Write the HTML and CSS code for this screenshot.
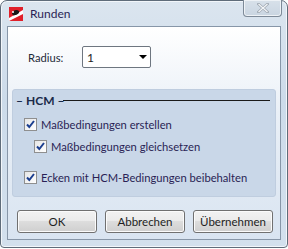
FILE: index.html
```html
<!DOCTYPE html>
<html>
<head>
<meta charset="utf-8">
<link rel="stylesheet" href="styles.css">
</head>
<body>
<div class="window">
  <div class="titlebar">
    <svg class="appicon" width="14" height="14" viewBox="0 0 14 14">
      <rect width="14" height="14" fill="#e0202a"/>
      <path d="M0 11 L14 3 L14 7 L0 14 Z" fill="#ffffff"/>
      <path d="M3 6 C4 3 8 2 10 4 C11 6 8 8 6 8 C5 9 3 8 3 6 Z" fill="#1a1a1a"/>
      <circle cx="4" cy="5" r="1" fill="#ffffff"/>
    </svg>
    <span class="title">Runden</span>
    <div class="close">
      <svg width="12" height="10" viewBox="0 0 12 10">
        <path d="M1.5 1 L10.5 9 M10.5 1 L1.5 9" stroke="#9ea7b1" stroke-width="2.6" stroke-linecap="square"/>
        <path d="M1.5 1 L10.5 9 M10.5 1 L1.5 9" stroke="#f4f6f8" stroke-width="1.2"/>
      </svg>
    </div>
  </div>
  <div class="client">
    <div class="row-radius">
      <span class="label">Radius:</span>
      <div class="combo"><span>1</span><span class="arrow"></span></div>
    </div>
    <div class="group">
      <div class="group-head"><span class="dash">–</span><span class="gtitle">HCM</span><span class="dash2">–</span><span class="line"></span></div>
      <label class="check lvl1"><span class="box"><svg width="9" height="9" viewBox="0 0 9 9"><path d="M1 4.5 L3.3 7 L8 1" fill="none" stroke="#1b3e8f" stroke-width="2"/></svg></span>Maßbedingungen erstellen</label>
      <label class="check lvl2"><span class="box"><svg width="9" height="9" viewBox="0 0 9 9"><path d="M1 4.5 L3.3 7 L8 1" fill="none" stroke="#1b3e8f" stroke-width="2"/></svg></span>Maßbedingungen gleichsetzen</label>
      <label class="check lvl1 last"><span class="box"><svg width="9" height="9" viewBox="0 0 9 9"><path d="M1 4.5 L3.3 7 L8 1" fill="none" stroke="#1b3e8f" stroke-width="2"/></svg></span>Ecken mit HCM-Bedingungen beibehalten</label>
    </div>
    <div class="buttons">
      <button class="btn">OK</button>
      <button class="btn">Abbrechen</button>
      <button class="btn">Übernehmen</button>
    </div>
  </div>
</div>
</body>
</html>
```
FILE: styles.css
```css
html, body { margin: 0; padding: 0; }
body {
  width: 288px; height: 249px; overflow: hidden;
  font-family: "Lato", "Noto Sans", sans-serif;
  font-size: 11.2px; color: #1e1e1e;
  background: #ffffff;
  white-space: nowrap;
}
.window {
  box-sizing: border-box;
  width: 288px; height: 248px;
  border: 1px solid #5f6c7a;
  border-radius: 7px 7px 4px 4px;
  background: linear-gradient(180deg, #dbe5ef 0%, #ccdbea 40%, #d3e0ed 100%);
  display: flex; flex-direction: column;
  box-shadow: inset 0 0 0 1px #f2f6fa;
}
.titlebar {
  height: 25px; display: flex; align-items: center;
  padding-left: 8px; position: relative;
}
.appicon { margin-right: 7px; margin-top: 1px; }
.title { color: #2a1f55; font-size: 12px; margin-top: -1px; }
.close {
  position: absolute; right: 5px; top: -1px;
  width: 39px; height: 17px; box-sizing: border-box;
  border: 1px solid #7d8a98; border-top: none;
  border-radius: 0 0 4px 4px;
  background: linear-gradient(180deg, #d8e1ea, #c9d5e1);
  box-shadow: inset 0 0 0 1px #eef2f6;
  display: flex; align-items: center; justify-content: center;
}
.client {
  margin: 0 6px 0 6px;
  height: 214px; box-sizing: border-box;
  border: 1px solid #8796a8;
  background: linear-gradient(180deg, #ffffff 0%, #eaf0f7 40%, #d9e4f1 100%);
  display: flex; flex-direction: column;
  padding: 0 4px;
}
.row-radius {
  display: flex; align-items: center;
  height: 22px; margin-top: 19px;
  padding-left: 16px;
}
.label { width: 54px; color: #1e2a3a; }
.combo {
  width: 69px; height: 22px; box-sizing: border-box;
  border: 1px solid #6e7680; border-radius: 2px;
  background: #ffffff;
  display: flex; align-items: center; justify-content: space-between;
  padding: 0 3px 0 4px;
  font-size: 12px;
}
.arrow {
  width: 0; height: 0;
  border-left: 4px solid transparent; border-right: 4px solid transparent;
  border-top: 4px solid #000;
}
.group {
  margin-top: 21px;
  height: 108px; box-sizing: border-box;
  background: #c9d7e8;
  border: 1px solid #bfcddf;
  border-radius: 3px;
  padding: 2px 5px 0 3px;
  display: flex; flex-direction: column;
}
.group-head {
  display: flex; align-items: center; height: 16px;
  font-weight: bold; color: #1a2a4a; font-size: 12px;
}
.dash { margin-right: 3px; }
.gtitle { margin-right: 3px; }
.dash2 { margin-right: 0; }
.line { flex: 1; height: 1px; background: #1a1a1a; margin-left: -1px; }
.check {
  display: flex; align-items: center; height: 14px;
  color: #2a1f55;
}
.lvl1 { padding-left: 8px; margin-top: 9px; }
.lvl2 { padding-left: 18px; margin-top: 8px; }
.last { margin-top: 17px; }
.box {
  width: 11px; height: 11px;
  border: 1px solid #8f8f8f;
  background: linear-gradient(135deg, #e6e6e6, #ffffff);
  margin-right: 4px;
  display: flex; align-items: center; justify-content: center;
}
.buttons {
  display: flex; gap: 8px; margin-top: 13px; padding-left: 5px;
}
.btn {
  width: 80px; height: 23px; box-sizing: border-box;
  border: 1px solid #707070; border-radius: 3px;
  background: linear-gradient(180deg, #f2f2f2 0%, #ebebeb 45%, #dddddd 50%, #cfcfcf 100%);
  box-shadow: inset 0 0 0 1px #fbfbfb;
  font-family: inherit; font-size: 11.5px; color: #1e1e1e;
  padding: 0;
}
```
